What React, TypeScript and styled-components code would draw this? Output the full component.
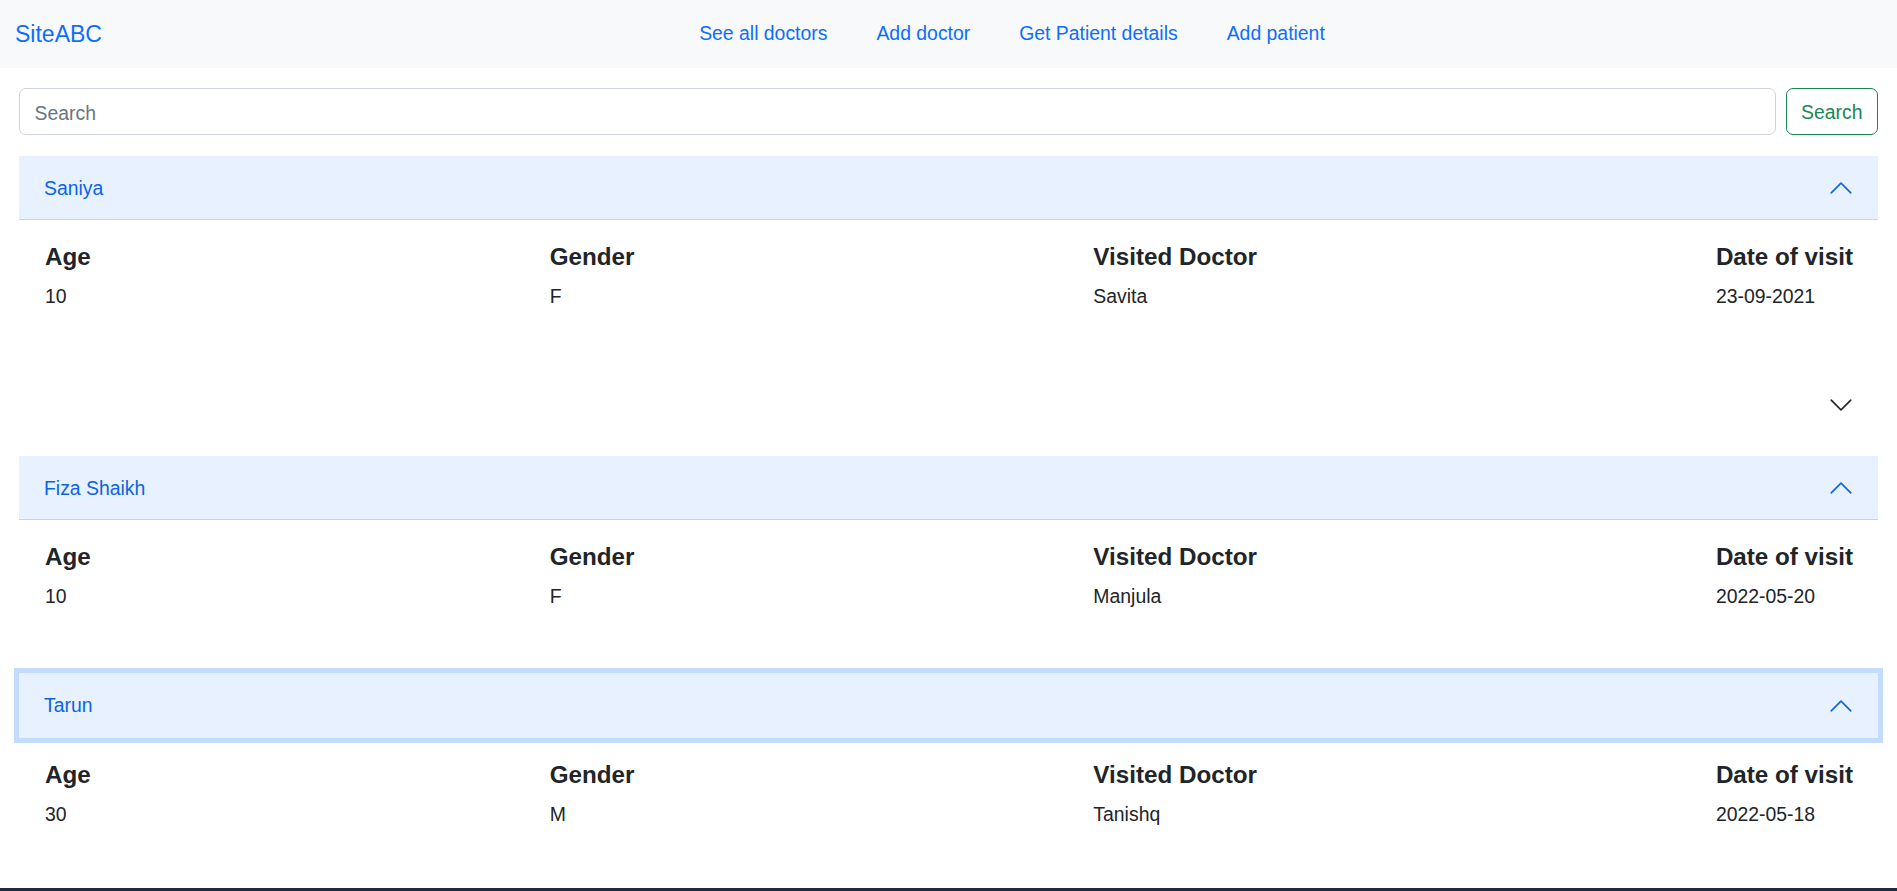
import React from "react";
import styled, { createGlobalStyle, css } from "styled-components";

const GlobalStyle = createGlobalStyle`
  html, body {
    margin: 0;
    padding: 0;
    background: #ffffff;
    color: #212529;
    font-family: "Liberation Sans", Arial, sans-serif;
    font-size: 19.4px;
    line-height: 1.5;
  }
  * { box-sizing: border-box; }
`;

const Navbar = styled.nav`
  display: flex;
  align-items: center;
  height: 68px;
  padding: 0 15px;
  background: #f8f9fa;
`;

const Brand = styled.a`
  font-size: 23px;
  line-height: 1.5;
  color: #0d6efd;
  text-decoration: none;
  margin-right: 40px;
  white-space: nowrap;
`;

const NavList = styled.ul`
  flex: 1;
  display: flex;
  justify-content: center;
  gap: 49px;
  list-style: none;
  margin: 0;
  padding: 0;
`;

const NavLink = styled.a`
  color: #0d6efd;
  text-decoration: none;
  font-size: 19.4px;
  line-height: 1.6;
  white-space: nowrap;
`;

const Page = styled.main`
  padding: 20px 19px 0;
`;

const SearchForm = styled.form`
  display: flex;
  gap: 10px;
  height: 47px;
`;

const SearchInput = styled.input`
  flex: 1;
  height: 100%;
  padding: 9px 14.5px 5px;
  font-family: inherit;
  font-size: 19.4px;
  color: #212529;
  border: 1px solid #ced4da;
  border-radius: 7px;
  outline: none;
  &::placeholder { color: #6c757d; }
`;

const SearchButton = styled.button`
  height: 100%;
  padding: 2px 14.5px 0;
  font-family: inherit;
  font-size: 19.4px;
  color: #198754;
  background: transparent;
  border: 1px solid #198754;
  border-radius: 7px;
`;

const Accordion = styled.div`
  margin-top: 21px;
`;

const Item = styled.div`
  background: #ffffff;
`;

const Header = styled.button<{ $open: boolean; $focused?: boolean }>`
  position: relative;
  z-index: ${(p) => (p.$focused ? 3 : 1)};
  display: flex;
  align-items: center;
  justify-content: space-between;
  width: 100%;
  height: 64px;
  padding: 0 24px 0 25px;
  border: 0;
  font-family: inherit;
  font-size: 19.4px;
  text-align: left;
  background: #ffffff;
  color: #212529;
  ${(p) =>
    p.$open &&
    css`
      background: #e7f1ff;
      color: #0c63e4;
      box-shadow: inset 0 -1px 0 #cbd3de;
    `}
  ${(p) =>
    p.$focused &&
    css`
      height: 65px;
      box-shadow: 0 0 0 5px #c3dbff;
    `}
`;

const Chevron = styled.svg<{ $open: boolean }>`
  width: 26px;
  height: 26px;
  flex-shrink: 0;
  fill: ${(p) => (p.$open ? "#0c63e4" : "#212529")};
  transform: ${(p) => (p.$open ? "rotate(180deg)" : "none")};
`;

const Collapsing = styled.div`
  height: 19px;
`;

const Body = styled.div`
  display: flex;
  justify-content: space-between;
  padding: 22px 25px 62px 26px;
`;

const Field = styled.div`
  display: flex;
  flex-direction: column;
`;

const FieldLabel = styled.h5`
  margin: 0 0 11px;
  font-size: 24.2px;
  line-height: 29px;
  font-weight: 700;
  color: #212529;
`;

const FieldValue = styled.p`
  margin: 0;
  font-size: 19.4px;
  line-height: 29px;
  color: #212529;
`;

const TaskbarEdge = styled.div`
  position: fixed;
  left: 0;
  right: 0;
  bottom: 0;
  height: 3px;
  background: #1e2a40;
  z-index: 10;
`;

type Patient = {
  name: string;
  age: string;
  gender: string;
  doctor: string;
  date: string;
  open: boolean;
  focused?: boolean;
};

const patients: Patient[] = [
  { name: "Saniya", age: "10", gender: "F", doctor: "Savita", date: "23-09-2021", open: true },
  { name: "", age: "", gender: "", doctor: "", date: "", open: false },
  { name: "Fiza Shaikh", age: "10", gender: "F", doctor: "Manjula", date: "2022-05-20", open: true },
  { name: "Tarun", age: "30", gender: "M", doctor: "Tanishq", date: "2022-05-18", open: true, focused: true },
];

const ChevronIcon = ({ open }: { open: boolean }) => (
  <Chevron $open={open} viewBox="0 0 16 16" aria-hidden>
    <path
      fillRule="evenodd"
      d="M1.646 4.646a.5.5 0 0 1 .708 0L8 10.293l5.646-5.647a.5.5 0 0 1 .708.708l-6 6a.5.5 0 0 1-.708 0l-6-6a.5.5 0 0 1 0-.708z"
    />
  </Chevron>
);

const PatientItem = ({ p }: { p: Patient }) => (
  <Item>
    <Header type="button" $open={p.open} $focused={p.focused}>
      <span>{p.name}</span>
      <ChevronIcon open={p.open} />
    </Header>
    {p.open ? (
      <Body>
        <Field>
          <FieldLabel>Age</FieldLabel>
          <FieldValue>{p.age}</FieldValue>
        </Field>
        <Field>
          <FieldLabel>Gender</FieldLabel>
          <FieldValue>{p.gender}</FieldValue>
        </Field>
        <Field>
          <FieldLabel>Visited Doctor</FieldLabel>
          <FieldValue>{p.doctor}</FieldValue>
        </Field>
        <Field>
          <FieldLabel>Date of visit</FieldLabel>
          <FieldValue>{p.date}</FieldValue>
        </Field>
      </Body>
    ) : (
      <Collapsing />
    )}
  </Item>
);

export default function App() {
  return (
    <>
      <GlobalStyle />
      <Navbar>
        <Brand href="#">SiteABC</Brand>
        <NavList>
          <li><NavLink href="#">See all doctors</NavLink></li>
          <li><NavLink href="#">Add doctor</NavLink></li>
          <li><NavLink href="#">Get Patient details</NavLink></li>
          <li><NavLink href="#">Add patient</NavLink></li>
        </NavList>
      </Navbar>
      <Page>
        <SearchForm onSubmit={(e) => e.preventDefault()}>
          <SearchInput type="search" placeholder="Search" aria-label="Search" />
          <SearchButton type="submit">Search</SearchButton>
        </SearchForm>
        <Accordion>
          {patients.map((p, i) => (
            <PatientItem key={i} p={p} />
          ))}
        </Accordion>
      </Page>
      <TaskbarEdge />
    </>
  );
}
